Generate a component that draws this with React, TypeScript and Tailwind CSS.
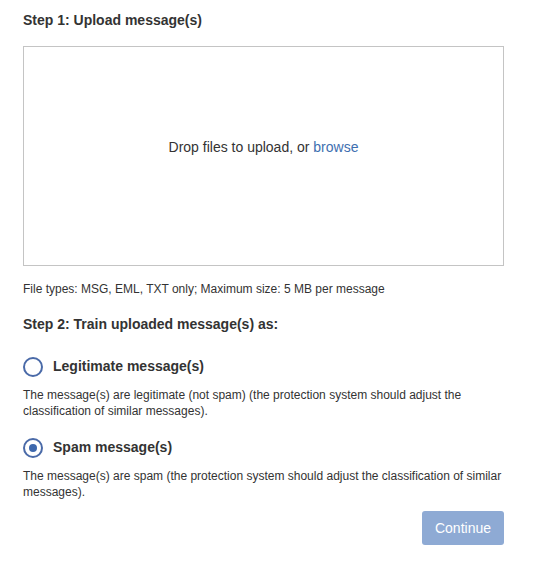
import { useState } from 'react'

export default function App() {
  const [kind, setKind] = useState<'legit' | 'spam'>('spam')

  return (
    <div className="min-h-screen bg-white text-[#333] font-['Liberation_Sans',Arial,sans-serif]">
      <div className="w-[481px] ml-[23px] pt-[12px]">
        <h2 className="text-[14px] font-bold leading-[16px]">Step 1: Upload message(s)</h2>

        {/* Drop zone */}
        <div className="mt-[18px] h-[220px] border border-[#c4c4c4] flex items-center justify-center">
          <p className="text-[14px] text-[#333] -mt-[17px]">
            Drop files to upload, or <a href="#" className="text-[#3e6fb0]">browse</a>
          </p>
        </div>

        <p className="mt-[16px] text-[12px] leading-[14px]">
          File types: MSG, EML, TXT only; Maximum size: 5 MB per message
        </p>

        <h2 className="mt-[20px] text-[14px] font-bold leading-[16px]">Step 2: Train uploaded message(s) as:</h2>

        <div className="mt-[24px]">
          <label className="flex items-center gap-[10px] cursor-pointer" onClick={() => setKind('legit')}>
            <Radio checked={kind === 'legit'} />
            <span className="text-[14px] font-bold">Legitimate message(s)</span>
          </label>
          <p className="mt-[10px] text-[12px] leading-[16px]">
            The message(s) are legitimate (not spam) (the protection system should adjust the classification of similar messages).
          </p>
        </div>

        <div className="mt-[18px]">
          <label className="flex items-center gap-[10px] cursor-pointer" onClick={() => setKind('spam')}>
            <Radio checked={kind === 'spam'} />
            <span className="text-[14px] font-bold">Spam message(s)</span>
          </label>
          <p className="mt-[10px] text-[12px] leading-[16px]">
            The message(s) are spam (the protection system should adjust the classification of similar messages).
          </p>
        </div>

        <div className="mt-[11px] flex justify-end">
          <button className="h-[34px] px-[13px] rounded-[3px] bg-[#8eaad4] text-white text-[14px]">
            Continue
          </button>
        </div>
      </div>
    </div>
  )
}

function Radio({ checked }: { checked: boolean }) {
  return (
    <span className="w-[20px] h-[20px] rounded-full border-2 border-[#4a6aa8] flex items-center justify-center shrink-0">
      {checked && <span className="w-[8px] h-[8px] rounded-full bg-[#3e68ad]" />}
    </span>
  )
}
